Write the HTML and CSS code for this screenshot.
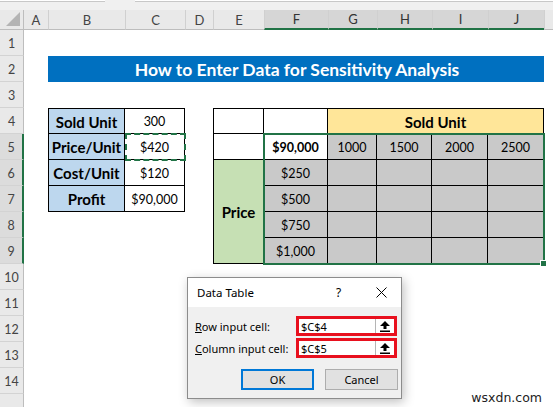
FILE: index.html
```html
<!DOCTYPE html>
<html>
<head>
<meta charset="utf-8">
<link rel="stylesheet" href="styles.css">
</head>
<body>
<div class="topbar"><div class="namebox"></div><div class="fbar"></div></div>
<div class="sheet">
  <div class="corner"><svg class="tri" width="16" height="16" viewBox="0 0 16 16"><polygon points="15,1 15,15 1,15" fill="#b4b4b4"/></svg></div>
  <div class="colheads">
    <div class="ch">A</div><div class="ch">B</div><div class="ch">C</div><div class="ch">D</div><div class="ch">E</div>
    <div class="ch sel">F</div><div class="ch sel">G</div><div class="ch sel">H</div><div class="ch sel">I</div><div class="ch sel">J</div><div class="ch"></div>
  </div>
  <div class="rowheads">
    <div class="rh">1</div><div class="rh">2</div><div class="rh">3</div><div class="rh">4</div>
    <div class="rh sel">5</div><div class="rh sel">6</div><div class="rh sel">7</div><div class="rh sel">8</div><div class="rh sel">9</div>
    <div class="rh">10</div><div class="rh">11</div><div class="rh">12</div><div class="rh">13</div><div class="rh">14</div><div class="rh"></div>
  </div>
  <div class="cells">
    <div class="title">How to Enter Data for Sensitivity Analysis</div>
    <div class="lt">
      <div class="lbl blue">Sold Unit</div><div class="num">300</div>
      <div class="lbl blue">Price/Unit</div><div class="num">$420</div>
      <div class="lbl blue">Cost/Unit</div><div class="num">$120</div>
      <div class="lbl blue">Profit</div><div class="num">$90,000</div>
    </div>
    <div class="ants"></div>
    <div class="rt">
      <div></div><div></div><div class="lbl yel span4">Sold Unit</div>
      <div></div><div class="num bold">$90,000</div><div class="num g">1000</div><div class="num g">1500</div><div class="num g">2000</div><div class="num g">2500</div>
      <div class="lbl grn rspan4">Price</div><div class="num g">$250</div><div class="g"></div><div class="g"></div><div class="g"></div><div class="g"></div>
      <div class="num g">$500</div><div class="g"></div><div class="g"></div><div class="g"></div><div class="g"></div>
      <div class="num g">$750</div><div class="g"></div><div class="g"></div><div class="g"></div><div class="g"></div>
      <div class="num g">$1,000</div><div class="g"></div><div class="g"></div><div class="g"></div><div class="g"></div>
    </div>
    <div class="selbox"><div class="handle"></div></div>
  </div>
</div>

<div class="dlg">
  <div class="dlg-title">
    <span class="dt-text">Data Table</span>
    <span class="dt-help">?</span>
    <svg class="dt-close" width="11" height="11" viewBox="0 0 11 11"><path d="M0.5 0.5 L10.5 10.5 M10.5 0.5 L0.5 10.5" stroke="#000" stroke-width="1"/></svg>
  </div>
  <div class="dlg-body">
    <div class="frow">
      <span class="flabel"><u>R</u>ow input cell:</span>
      <div class="inbox"><span class="inval">$C$4</span><span class="inbtn"><svg width="10" height="11" viewBox="0 0 10 11"><polygon points="5,0 10,5 6.5,5 6.5,8 3.5,8 3.5,5 0,5" fill="#000"/><rect x="0" y="9.5" width="10" height="1.5" fill="#000"/></svg></span></div>
    </div>
    <div class="frow">
      <span class="flabel"><u>C</u>olumn input cell:</span>
      <div class="inbox"><span class="inval">$C$5</span><span class="inbtn"><svg width="10" height="11" viewBox="0 0 10 11"><polygon points="5,0 10,5 6.5,5 6.5,8 3.5,8 3.5,5 0,5" fill="#000"/><rect x="0" y="9.5" width="10" height="1.5" fill="#000"/></svg></span></div>
    </div>
    <div class="btns">
      <div class="btn ok">OK</div>
      <div class="btn">Cancel</div>
    </div>
  </div>
</div>

<div class="wm">wsxdn.com</div>
</body>
</html>
```

FILE: styles.css
```css
* { box-sizing: border-box; }
html, body { margin: 0; padding: 0; }
body {
  width: 553px;
  height: 407px;
  overflow: hidden;
  background: #fff;
  font-family: Lato, "Open Sans", sans-serif;
  position: relative;
  color: #000;
}
:root {
  --cols: 24px 77px 60px 28px 51px 64px 49px 55px 56px 56px 1fr;
}
.topbar {
  height: 10px;
  background: #f0f0f0;
  display: flex;
  gap: 30px;
}
.namebox { width: 105px; height: 2px; background: #fff; border-bottom: 1px solid #c8c8c8; }
.fbar { flex: 1; height: 2px; background: #fff; border-bottom: 1px solid #c8c8c8; }

.sheet {
  display: grid;
  grid-template-columns: 24px 1fr;
  grid-template-rows: 20px 1fr;
  height: 397px;
}
.corner {
  background: #e9e9e9;
  border-right: 1px solid #bdbdbd;
  border-bottom: 1px solid #bdbdbd;
  display: flex;
  align-items: flex-end;
  justify-content: flex-end;
  padding: 0 2px 2px 0;
}
.tri { display: block; }
.colheads {
  display: grid;
  grid-template-columns: var(--cols);
  background: #e9e9e9;
}
.ch {
  border-left: 1px solid #d0d0d0;
  border-bottom: 1px solid #bdbdbd;
  display: flex;
  align-items: center;
  justify-content: center;
  font-size: 13px;
  color: #444;
}
.ch:first-child { border-left: none; }
.ch.sel {
  background: #d6d6d6;
  border-bottom: 2px solid #217346;
  color: #333;
}
.rowheads {
  display: grid;
  grid-template-rows: repeat(15, 26px);
  background: #e9e9e9;
}
.rh {
  border-bottom: 1px solid #d3d3d3;
  border-right: 1px solid #bdbdbd;
  display: flex;
  justify-content: center;
  align-items: flex-end;
  padding-bottom: 4px;
  font-size: 12.5px;
  color: #444;
}
.rh.sel {
  background: #dcdcdc;
  border-right: 2px solid #217346;
}

.cells {
  display: grid;
  grid-template-columns: var(--cols);
  grid-template-rows: repeat(15, 26px);
}
.title {
  grid-column: 2 / 11;
  grid-row: 2;
  background: #0070c0;
  color: #fff;
  font-weight: 700;
  font-size: 17.5px;
  display: flex;
  align-items: center;
  justify-content: center;
  padding-left: 2px;
}
.lt {
  grid-column: 2 / 4;
  grid-row: 4 / 8;
  display: grid;
  grid-template-columns: 76px 60px;
  grid-template-rows: 25px 26px 26px 26px;
  border-left: 1px solid #000;
  border-top: 1px solid #000;
}
.lt > div, .rt > div {
  border-right: 1px solid #000;
  border-bottom: 1px solid #000;
  display: flex;
  align-items: center;
  justify-content: center;
  padding-top: 1px;
}
.rt {
  grid-column: 5 / 11;
  grid-row: 4 / 10;
  display: grid;
  grid-template-columns: 50px 64px 49px 55px 56px 56px;
  grid-template-rows: 25px repeat(5, 26px);
  border-left: 1px solid #000;
  border-top: 1px solid #000;
}
.lbl { font-weight: 700; font-size: 15px; }
.num { font-size: 12.5px; }
.bold { font-weight: 700; }
.blue { background: #bdd7ee; }
.yel { background: #ffe699; }
.grn { background: #c6e0b4; }
.g { background: #c9c9c9; }
.span4 { grid-column: span 4; }
.rspan4 { grid-row: span 4; }

.ants {
  grid-column: 3 / 4;
  grid-row: 5;
  margin: -1px -1px -1px 0;
  border: 2px dashed #217346;
}
.selbox {
  grid-column: 6 / 11;
  grid-row: 5 / 10;
  margin: -1px;
  border: 2px solid #217346;
  position: relative;
}
.handle {
  position: absolute;
  right: -4px;
  bottom: -4px;
  width: 7px;
  height: 7px;
  background: #217346;
  border: 1px solid #fff;
}

.dlg {
  position: absolute;
  left: 187px;
  top: 277px;
  width: 215px;
  height: 122px;
  background: #f0f0f0;
  border: 1px solid #8c8c8c;
  box-shadow: 2px 3px 10px rgba(0,0,0,0.25);
  font-family: "Noto Sans", "Open Sans", sans-serif;
  font-size: 11px;
  color: #000;
}
.dlg-title {
  height: 29px;
  background: #fff;
  display: flex;
  align-items: center;
  padding-left: 9px;
  font-size: 11.5px;
}
.dt-text { width: 139px; }
.dt-help { width: 40px; font-size: 12px; }
.dt-close { display: block; }
.dlg-body {
  padding: 9px 3px 0 7px;
  display: flex;
  flex-direction: column;
  gap: 2px;
}
.frow {
  display: flex;
  align-items: center;
  height: 20px;
}
.flabel { width: 101px; }
.inbox {
  width: 101px;
  height: 20px;
  border: 3px solid #e8101e;
  background: #fff;
  display: flex;
  align-items: center;
}
.inval { flex: 1; padding-left: 2px; }
.inbtn {
  width: 19px;
  height: 100%;
  border-left: 1px solid #b5b5b5;
  display: flex;
  align-items: center;
  justify-content: center;
}
.inbtn svg { display: block; }
.btns {
  display: flex;
  justify-content: flex-end;
  gap: 11px;
  margin-top: 9px;
}
.btn {
  width: 73px;
  height: 21px;
  background: #e1e1e1;
  border: 1px solid #adadad;
  display: flex;
  align-items: center;
  justify-content: center;
}
.btn.ok { border: 2px solid #0078d7; }

.wm {
  position: absolute;
  right: 11px;
  bottom: 2px;
  font-family: "DejaVu Sans", sans-serif;
  font-size: 12.5px;
  color: #222;
}
```
